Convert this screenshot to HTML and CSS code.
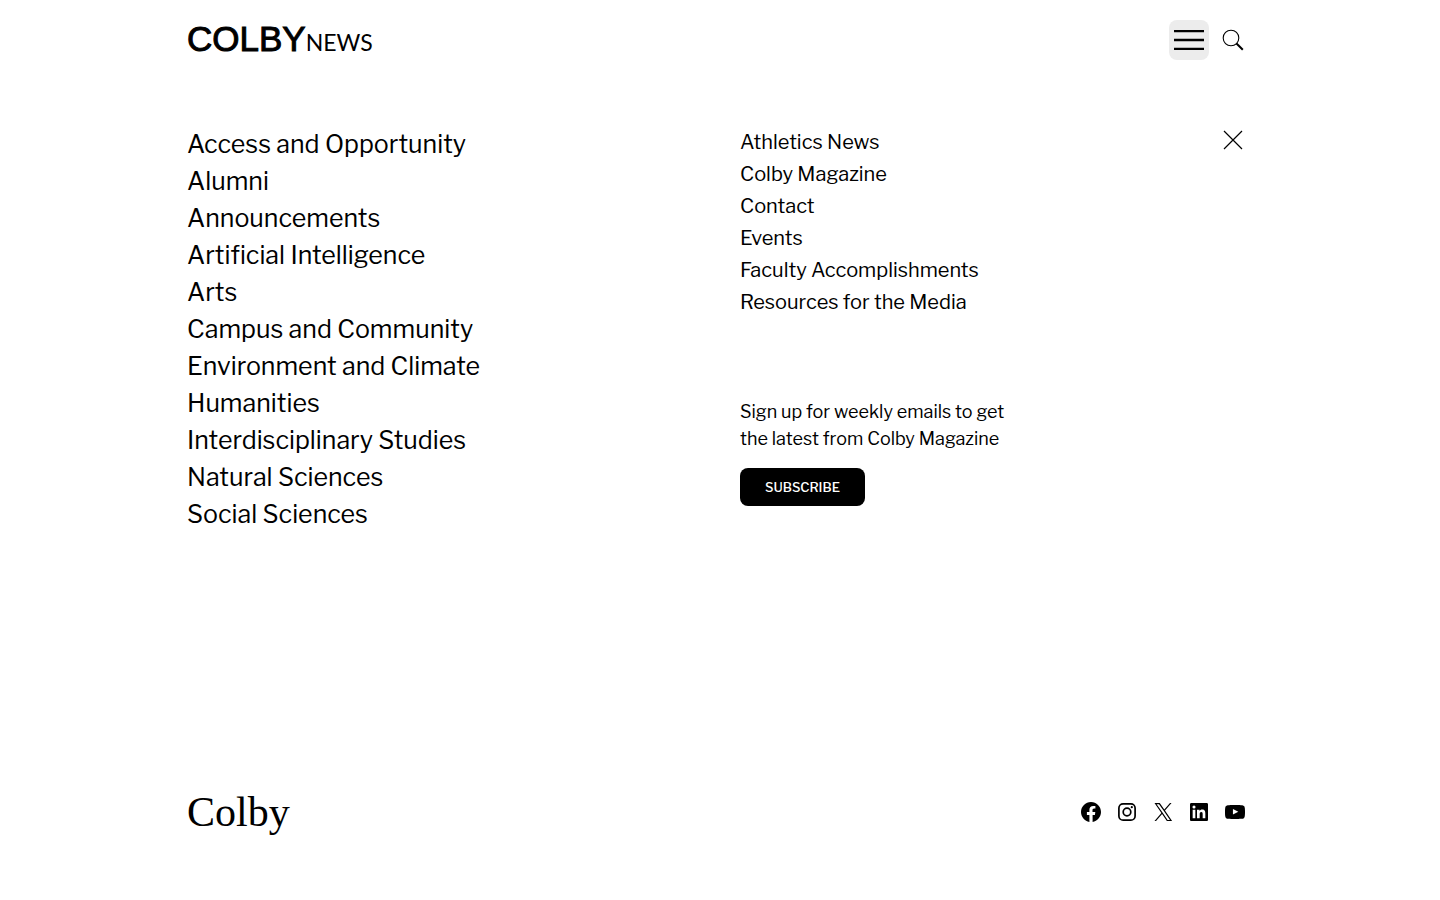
FILE: index.html
```html
<!DOCTYPE html>
<html lang="en">
<head>
<meta charset="utf-8">
<meta name="viewport" content="width=device-width, initial-scale=1">
<title>Colby News</title>
<link rel="stylesheet" href="styles.css">
</head>
<body>
<div class="page">
  <header class="header">
    <a class="brand" href="#" aria-label="Colby News"><span class="brand-main">COLBY</span><span class="brand-sub">NEWS</span></a>
    <div class="actions">
      <button class="icon-button menu-button" type="button" aria-label="Menu">
        <svg width="30" height="20" viewBox="0 0 30 20"><path d="M0 1.2h30M0 10h30M0 18.8h30" stroke="#000" stroke-width="2.3"/></svg>
      </button>
      <button class="icon-button" type="button" aria-label="Search">
        <svg width="22" height="22" viewBox="0 0 22 22" fill="none" stroke="#000"><circle cx="9" cy="9" r="7.8" stroke-width="1.1"/><path d="M14.5 14.5l6.3 6.3" stroke-width="2"/></svg>
      </button>
    </div>
  </header>
  <main class="menu">
    <nav aria-label="Topics">
      <ul class="links topics">
        <li><a href="#">Access and Opportunity</a></li>
        <li><a href="#">Alumni</a></li>
        <li><a href="#">Announcements</a></li>
        <li><a href="#">Artificial Intelligence</a></li>
        <li><a href="#">Arts</a></li>
        <li><a href="#">Campus and Community</a></li>
        <li><a href="#">Environment and Climate</a></li>
        <li><a href="#">Humanities</a></li>
        <li><a href="#">Interdisciplinary Studies</a></li>
        <li><a href="#">Natural Sciences</a></li>
        <li><a href="#">Social Sciences</a></li>
      </ul>
    </nav>
    <div class="aside">
      <div class="aside-top">
        <nav aria-label="More">
          <ul class="links">
            <li><a href="#">Athletics News</a></li>
            <li><a href="#">Colby Magazine</a></li>
            <li><a href="#">Contact</a></li>
            <li><a href="#">Events</a></li>
            <li><a href="#">Faculty Accomplishments</a></li>
            <li><a href="#">Resources for the Media</a></li>
          </ul>
        </nav>
        <button class="icon-button close-button" type="button" aria-label="Close">
          <svg width="20" height="20" viewBox="0 0 20 20"><path d="M1 1l18 18M19 1L1 19" stroke="#000" stroke-width="1.2"/></svg>
        </button>
      </div>
      <section class="signup">
        <p>Sign up for weekly emails to get<br>the latest from Colby Magazine</p>
        <a class="subscribe" href="#">SUBSCRIBE</a>
      </section>
    </div>
  </main>
  <footer class="footer">
    <a class="college" href="#">Colby</a>
    <div class="social">
      <a href="#" aria-label="Facebook"><svg viewBox="0 0 24 24"><path d="M12 2C6.5 2 2 6.5 2 12c0 5 3.7 9.1 8.4 9.9v-7H7.9V12h2.5V9.8c0-2.5 1.5-3.9 3.8-3.9 1.1 0 2.2.2 2.2.2v2.5h-1.300c-1.200 0-1.600.8-1.600 1.600V12h2.800l-.4 2.900h-2.300v7C18.300 21.100 22 17 22 12c0-5.500-4.500-10-10-10z"/></svg></a>
      <a href="#" aria-label="Instagram"><svg viewBox="0 0 24 24" fill="none" stroke="#000" stroke-width="1.700"><rect x="3.900" y="3.900" width="16.200" height="16.200" rx="4.200"/><circle cx="12" cy="12" r="3.800"/><circle cx="16.800" cy="7.200" r="1.100" fill="#000" stroke="none"/></svg></a>
      <a href="#" aria-label="X"><svg viewBox="0 0 24 24"><path d="M13.982 10.622 20.540 3h-1.554l-5.693 6.618L8.745 3H3.500l6.876 10.007L3.500 21h1.554l6.012-6.989L15.868 21h5.245l-7.131-10.378Zm-2.128 2.474-.697-.997-5.543-7.930H8l4.474 6.400.697.996 5.815 8.318h-2.387l-4.745-6.787Z"/></svg></a>
      <a href="#" aria-label="LinkedIn"><svg viewBox="0 0 24 24"><path d="M19.700 3H4.300C3.582 3 3 3.582 3 4.300v15.400c0 .718.582 1.300 1.300 1.300h15.400c.718 0 1.300-.582 1.300-1.300V4.300c0-.718-.582-1.300-1.300-1.300zM8.339 18.338H5.667v-8.590h2.672v8.590zM7.004 8.574a1.548 1.548 0 1 1 0-3.096 1.548 1.548 0 0 1 0 3.096zM18.339 18.338h-2.669v-4.177c0-.996-.017-2.278-1.387-2.278-1.389 0-1.601 1.086-1.601 2.206v4.249h-2.667v-8.590h2.559v1.174h.037c.356-.675 1.227-1.387 2.526-1.387 2.703 0 3.203 1.779 3.203 4.092v4.711z"/></svg></a>
      <a href="#" aria-label="YouTube"><svg viewBox="0 0 24 24"><path fill-rule="evenodd" d="M21.800 8s-.195-1.377-.795-1.984c-.760-.797-1.613-.800-2.004-.847C16.203 4.967 12.004 4.967 12.004 4.967h-.008s-4.198 0-6.997.202c-.390.047-1.242.050-2.003.847C2.395 6.623 2.200 8 2.200 8S2 9.620 2 11.238v1.517C2 14.374 2.200 15.992 2.200 15.992s.195 1.378.795 1.984c.761.797 1.760.771 2.205.855C6.800 18.985 12 19.033 12 19.033s4.203-.006 7.001-.209c.391-.047 1.243-.051 2.004-.847.600-.606.795-1.984.795-1.984S22 14.374 22 12.755v-1.517C22 9.620 21.800 8 21.800 8zM9.935 14.595V8.972l5.403 2.821z"/></svg></a>
    </div>
  </footer>
</div>
</body>
</html>
```
FILE: styles.css
```css
* { box-sizing: border-box; }
body {
  margin: 0;
  padding: 0 32px 0 24px;
  background: #fff;
  color: #000;
  font-family: "Libre Franklin", "Liberation Sans", Arial, sans-serif;
}
a { color: inherit; text-decoration: none; }
svg { display: block; }
.page {
  max-width: 1058px;
  min-height: 100vh;
  margin: 0 auto;
  padding-bottom: 60px;
  display: flex;
  flex-direction: column;
}
.header {
  height: 80px;
  display: flex;
  align-items: center;
  justify-content: space-between;
}
.brand { display: flex; align-items: baseline; line-height: 40px; }
.brand-main { font-family: "Liberation Sans", Arial, sans-serif; font-size: 35px; -webkit-text-stroke: 1px #000; }
.brand-sub { font-family: Lato, sans-serif; font-size: 23px; }
.actions { display: flex; align-items: center; gap: 12px; }
.icon-button {
  display: flex;
  align-items: center;
  justify-content: center;
  padding: 0;
  border: 0;
  background: none;
  cursor: pointer;
}
.actions .icon-button { min-width: 24px; height: 40px; }
.actions .menu-button { width: 40px; border-radius: 8px; background: #ececec; }
.menu {
  flex: 1;
  display: grid;
  grid-template-columns: 1fr 1fr;
  gap: 48px;
  align-items: start;
  padding-top: 46px;
}
.links { margin: 0; padding: 0; list-style: none; font-size: 20px; line-height: 32px; }
.topics { font-size: 25px; line-height: 37px; }
.aside-top { display: flex; justify-content: space-between; align-items: flex-start; }
.close-button { width: 24px; height: 28px; }
.signup { padding-top: 80px; font-size: 18px; line-height: 27px; }
.signup p { margin: 0 0 16px; }
.subscribe {
  display: inline-block;
  padding: 0 25px;
  border-radius: 8px;
  background: #000;
  color: #fff;
  font-size: 13px;
  font-weight: 500;
  line-height: 38px;
}
.footer { display: flex; align-items: center; justify-content: space-between; }
.college { font-family: "Liberation Serif", serif; font-size: 42px; line-height: 56px; }
.social { display: flex; gap: 12px; margin-right: -2px; }
.social svg { width: 24px; height: 24px; }
```
